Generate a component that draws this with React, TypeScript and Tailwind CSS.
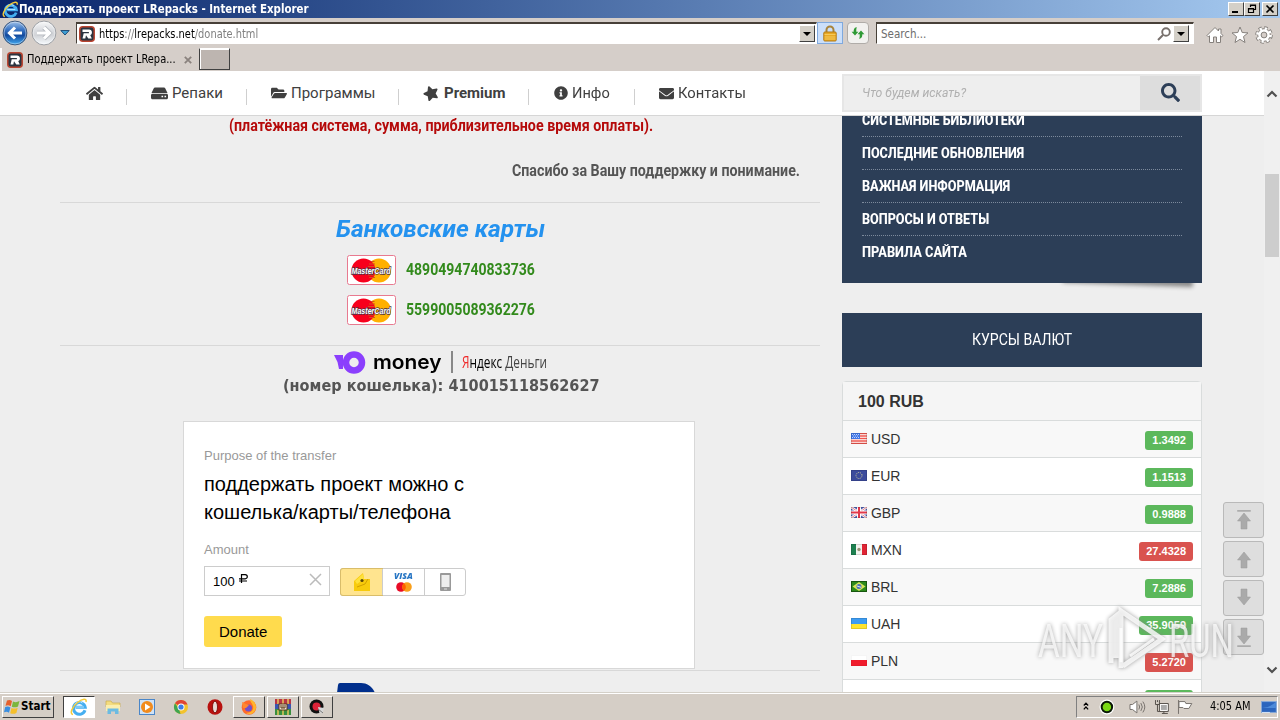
import { ReactNode, useLayoutEffect, useRef, useState } from 'react';
import { FaHome, FaFolderOpen, FaStar, FaInfoCircle, FaEnvelope, FaSearch } from 'react-icons/fa';

// Renders a line of text squeezed or stretched to an exact width
function Fit({ w, className = '', children }: { w: number; className?: string; children: ReactNode }) {
  const ref = useRef<HTMLSpanElement>(null);
  const [scale, setScale] = useState(1);

  useLayoutEffect(() => {
    if (ref.current) setScale(w / ref.current.offsetWidth);
  }, [w]);

  return (
    <span className={`block shrink-0 whitespace-nowrap ${className}`} style={{ width: w }}>
      <span ref={ref} className="inline-block origin-left" style={{ transform: `scaleX(${scale})` }}>
        {children}
      </span>
    </span>
  );
}

const menuItems = [
  { label: 'СИСТЕМНЫЕ БИБЛИОТЕКИ', w: 163 },
  { label: 'ПОСЛЕДНИЕ ОБНОВЛЕНИЯ', w: 162 },
  { label: 'ВАЖНАЯ ИНФОРМАЦИЯ', w: 148 },
  { label: 'ВОПРОСЫ И ОТВЕТЫ', w: 127 },
  { label: 'ПРАВИЛА САЙТА', w: 105 },
];

const rates = [
  { code: 'USD', value: '1.3492', up: true },
  { code: 'EUR', value: '1.1513', up: true },
  { code: 'GBP', value: '0.9888', up: true },
  { code: 'MXN', value: '27.4328', up: false },
  { code: 'BRL', value: '7.2886', up: true },
  { code: 'UAH', value: '35.9059', up: true },
  { code: 'PLN', value: '5.2720', up: false },
];

function Flag({ code }: { code: string }) {
  return (
    <svg width="16" height="11" viewBox="0 0 16 11" className="mb-[2px] shrink-0">
      {code === 'USD' && (
        <>
          <rect width="16" height="11" fill="#fff" />
          <path d="M0 .5h16M0 3h16M0 5.5h16M0 8h16M0 10.5h16" stroke="#f0574f" strokeWidth="1.3" />
          <rect width="9" height="6" fill="#3f76e8" />
          <path d="M1 1.5h7M2 3h6M1 4.5h7" stroke="#dfe8ff" strokeWidth=".8" strokeDasharray="1 1" />
        </>
      )}
      {code === 'EUR' && (
        <>
          <rect width="16" height="11" fill="#3c4b9c" />
          <circle cx="8" cy="5.5" r="3" fill="none" stroke="#d5d29a" strokeWidth="1" strokeDasharray="1 1.1" />
        </>
      )}
      {code === 'GBP' && (
        <>
          <rect width="16" height="11" fill="#4f5fae" />
          <path d="M0 0l16 11M16 0L0 11" stroke="#fff" strokeWidth="2.4" />
          <path d="M0 0l16 11M16 0L0 11" stroke="#dc6070" strokeWidth=".8" />
          <path d="M8 0v11M0 5.5h16" stroke="#fff" strokeWidth="4" />
          <path d="M8 0v11M0 5.5h16" stroke="#e2384a" strokeWidth="2" />
        </>
      )}
      {code === 'MXN' && (
        <>
          <rect width="16" height="11" fill="#f4f4f0" />
          <rect width="5" height="11" fill="#1e8050" />
          <rect x="11" width="5" height="11" fill="#e02535" />
          <circle cx="8" cy="5.5" r="1.7" fill="#9b9478" />
        </>
      )}
      {code === 'BRL' && (
        <>
          <rect width="16" height="11" fill="#2c8a1c" />
          <path d="M8 1l6.5 4.5L8 10 1.5 5.5z" fill="#d8e45a" />
          <circle cx="8" cy="5.5" r="2.5" fill="#4a72b8" />
          <path d="M6 5l4 1.3" stroke="#fff" strokeWidth=".8" />
          <rect x=".5" y=".5" width="15" height="10" fill="none" stroke="#1c6412" />
        </>
      )}
      {code === 'UAH' && (
        <>
          <rect width="16" height="11" fill="#ffe42e" />
          <rect width="16" height="6" fill="#3d9cf2" />
        </>
      )}
      {code === 'PLN' && (
        <>
          <rect width="16" height="11" fill="#fff" />
          <rect y="5" width="16" height="6" fill="#f01c2c" />
        </>
      )}
      <rect x=".5" y=".5" width="15" height="10" fill="none" stroke="#000" strokeOpacity={code === 'PLN' ? 0.04 : 0.12} />
    </svg>
  );
}

function SiteIcon() {
  return (
    <svg width="16" height="16" viewBox="0 0 16 16" className="shrink-0">
      <rect x=".8" y=".8" width="14.4" height="14.4" rx="3" fill="#2b3440" stroke="#b8432f" strokeWidth="1.500" />
      <path d="M3.500 3.500h6.500c3.600 0 3.800 5 1.200 5.600L12.800 12.500H9.300L7 9.200 6.300 12.500H3.500l1.200-5.200h5.200V6H3.500z" fill="#fff" />
    </svg>
  );
}

function IeIcon({ size }: { size: number }) {
  return (
    <svg width={size} height={size} viewBox="0 0 18 18" className="shrink-0">
      <path d="M15 12.300A5.900 5.900 0 1 1 15.200 9.300H5.500" fill="none" stroke="#45aef0" strokeWidth="3" />
      <path d="M5.500 9h8.500M4.500 7a5 5 0 0 1 8-2" fill="none" stroke="#b4e4ff" strokeWidth="1" />
      <path d="M3 16.500C-1 15.500 2.500 8.500 7.500 4.500s9.500-4.500 8.500-.5" fill="none" stroke="#f4cb3a" strokeWidth="1.500" />
    </svg>
  );
}

function NavArrow({ forward }: { forward?: boolean }) {
  return (
    <svg width="26" height="26" viewBox="0 0 26 26" className="shrink-0">
      <defs>
        <linearGradient id={forward ? 'fwd' : 'back'} x1="0" y1="0" x2="0" y2="1">
          <stop offset="0" stopColor={forward ? '#fafafa' : '#a4c4ea'} />
          <stop offset=".35" stopColor={forward ? '#dcdee2' : '#3c76c4'} />
          <stop offset=".6" stopColor={forward ? '#d2d4d8' : '#124a9e'} />
          <stop offset="1" stopColor={forward ? '#f8fcff' : '#46aef4'} />
        </linearGradient>
      </defs>
      <circle cx="13" cy="13" r="11.900" fill={forward ? 'url(#fwd)' : 'url(#back)'} stroke={forward ? '#9a9da2' : '#3b5578'} />
      <circle cx="13" cy="13" r="10.900" fill="none" stroke="#fff" strokeOpacity=".4" />
      <g transform={forward ? 'translate(26 0) scale(-1 1)' : undefined} fill="none">
        {forward && <path d="M20 13H8.500M13 7.500L7.500 13l5.500 5.500" stroke="#b4b8be" strokeWidth="4.600" />}
        <path d="M20 13H8.500M13 7.500L7.500 13l5.500 5.500" stroke="#fff" strokeWidth="3.100" />
      </g>
    </svg>
  );
}

function DropButton() {
  return (
    <span className="flex h-[17px] w-4 shrink-0 items-center justify-center border border-t-white border-l-white border-r-[#404040] border-b-[#404040] bg-[#d4d0c8]">
      <svg width="8" height="4" viewBox="0 0 8 4"><path d="M0 0h8L4 4z" fill="#000" /></svg>
    </span>
  );
}

function WindowButton({ kind }: { kind: 'min' | 'restore' | 'close' }) {
  return (
    <span className="flex h-[14px] w-4 items-center justify-center border border-t-white border-l-white border-r-[#404040] border-b-[#404040] bg-[#d4d0c8]">
      <svg width="10" height="10" viewBox="0 0 10 10" fill="none" stroke="#000">
        {kind === 'min' && <path d="M1 8h6" strokeWidth="2" />}
        {kind === 'restore' && <path d="M3.500 3V1h5v4.500H7M3 1.500h6M1.500 4.500h5v4h-5zM1 5h6" strokeWidth="1.200" />}
        {kind === 'close' && <path d="M1.500 1.500l7 7M8.500 1.500l-7 7" strokeWidth="1.700" />}
      </svg>
    </span>
  );
}

function BrowserChrome() {
  return (
    <div className="h-[71px] shrink-0 bg-[#d5cec9] font-['DejaVu_Sans_Condensed','DejaVu_Sans',sans-serif] text-[11.500px]">
      <div className="flex h-[18px] items-center bg-linear-to-r from-[#0a246a] to-[#a6caf0] pr-[2px] pl-[2px] text-white">
        <IeIcon size={17} />
        <Fit w={290} className="font-bold leading-[18px]">Поддержать проект LRepacks - Internet Explorer</Fit>
        <div className="ml-auto flex">
          <WindowButton kind="min" />
          <WindowButton kind="restore" />
          <span className="ml-[2px]"><WindowButton kind="close" /></span>
        </div>
      </div>

      {/* Address bar */}
      <div className="flex h-[30px] items-center pl-[2px]">
        <div className="flex gap-[3px]">
          <NavArrow />
          <NavArrow forward />
        </div>
        <svg width="10" height="6" viewBox="0 0 10 6" className="ml-[3px] shrink-0"><path d="M.8.5h8.400L5 5z" fill="#3f9fd4" stroke="#224e78" /></svg>
        <div className="ml-[6px] flex h-[22px] w-[741px] shrink-0 items-center border border-t-2 border-t-[#474038] border-l-[#474038] border-r-white border-b-white bg-white pl-[2px]">
          <SiteIcon />
          <Fit w={159} className="ml-[4px] leading-[18px]">
            <span className="text-black">https</span><span className="text-[#808080]">://</span><span className="text-black">lrepacks.net</span><span className="text-[#808080]">/donate.html</span>
          </Fit>
          <span className="mr-px ml-auto"><DropButton /></span>
        </div>
        <div className="flex h-[22px] w-[26px] shrink-0 items-center justify-center border border-[#7fa9de] bg-[#cbdffa]">
          <svg width="14" height="17" viewBox="0 0 14 17">
            <path d="M3.500 8V5a3.500 3.500 0 0 1 7 0v3" fill="none" stroke="#a8843c" strokeWidth="2" />
            <rect x=".8" y="7" width="12.400" height="9" rx="1" fill="#e9a925" stroke="#b37a14" />
            <path d="M1.500 9.500h11M1.500 12h11M1.500 14h11" stroke="#f8d36c" strokeWidth=".8" />
          </svg>
        </div>
        <div className="ml-1 flex h-[22px] w-[22px] shrink-0 items-center justify-center rounded-sm border border-[#b0aca8] bg-[#f2f1ef]">
          <svg width="14" height="12" viewBox="0 0 16 14" fill="#2f9a35">
            <path d="M6.500 0C3 1 3 3.500 3 5.500H.5l4 4.500 4-4.500H6V3z" />
            <path d="M9.500 14c3.500-1 3.500-3.500 3.500-5.500h2.500l-4-4.500-4 4.500H10V11z" />
          </svg>
        </div>
        <div className="ml-[7px] flex h-[22px] w-[318px] shrink-0 items-center border border-t-2 border-t-[#474038] border-l-[#474038] border-r-white border-b-white bg-white pl-1">
          <Fit w={45} className="leading-[18px] text-[#6d6d6d]">Search...</Fit>
          <svg width="15" height="14" viewBox="0 0 15 14" fill="none" stroke="#77706c" strokeWidth="1.900" className="mr-px ml-auto">
            <circle cx="9" cy="5" r="3.800" />
            <path d="M6 8l-5 5" />
          </svg>
          <span className="mr-1"><DropButton /></span>
        </div>
        <div className="mt-1 ml-[12px] flex gap-[7px]">
          <svg width="18" height="18" viewBox="0 0 18 18" fill="#fff" stroke="#85807c" strokeLinejoin="round">
            <path d="M1 9.500L9 1.500l3.500 3.500V3H15v4.500l2 2-1.300 1.300-1.200-1V16.500h-4V11h-3v5.500h-4V9.800l-1.200 1z" />
          </svg>
          <svg width="18" height="18" viewBox="0 0 18 18" fill="#fff" stroke="#85807c" strokeLinejoin="round">
            <path d="M9 1l2.200 5.500 5.800.4-4.500 3.700 1.500 5.900-5-3.200-5 3.200 1.500-5.900L1 6.900l5.800-.4z" />
          </svg>
          <svg width="18" height="18" viewBox="0 0 18 18" className="-ml-px">
            <circle cx="9" cy="9" r="7" fill="none" stroke="#85807c" strokeWidth="3.600" strokeDasharray="3.200 2.300" />
            <circle cx="9" cy="9" r="6.300" fill="#fff" stroke="#85807c" />
            <circle cx="9" cy="9" r="6.500" fill="none" stroke="#fff" strokeWidth="2.800" strokeDasharray="2.200 2.900" />
            <circle cx="9" cy="9" r="2.900" fill="#d5cec9" stroke="#85807c" />
          </svg>
        </div>
      </div>

      {/* Tabs */}
      <div className="flex h-[23px]">
        <div className="flex w-[198px] items-center border-l-2 border-l-white pl-[5px]">
          <SiteIcon />
          <Fit w={149} className="ml-[4px] text-black">Поддержать проект LRepa...</Fit>
          <svg width="8" height="8" viewBox="0 0 8 8" className="ml-[8px]"><path d="M.8.8l6.400 6.400M7.200.8L.8 7.200" stroke="#8a827e" strokeWidth="1.800" /></svg>
        </div>
        <div className="ml-px h-[22px] w-[31px] border border-t-white border-l-[#404040] border-r-[#404040] border-b-[#404040] bg-[#bdb5b0] shadow-[inset_1px_1px_0_#fff]" />
      </div>
    </div>
  );
}

function Separator({ className }: { className: string }) {
  return <span className={`mt-2 h-4 w-px bg-[#cfcfcf] ${className}`} />;
}

function SiteHeader() {
  return (
    <div className="flex h-[45px] shrink-0 border-b border-[#d6d6d6] bg-white text-[#404040]">
      <nav className="flex h-[44px] w-[842px] items-center pl-[86px] text-[15px]">
        <FaHome size={17} />
        <Separator className="ml-[23px]" />
        <svg width="17" height="13" viewBox="0 0 17 13" fill="currentColor" className="ml-[24px]">
          <path d="M4 .5h9c.6 0 1 .3 1.200.8L16.500 6H.5l2.300-4.700C3 .8 3.400.5 4 .5z" />
          <path fillRule="evenodd" d="M1.500 6.800h14c.9 0 1.500.6 1.500 1.500v2.400c0 .9-.6 1.500-1.500 1.500h-14C.6 12.200 0 11.600 0 10.700V8.300c0-.9.600-1.500 1.500-1.500zm9 1.900v1.600h1.600V8.700zm3 0v1.600h1.600V8.700z" />
        </svg>
        <Fit w={51} className="ml-[4px]">Репаки</Fit>
        <Separator className="ml-[23px]" />
        <FaFolderOpen size={16} className="ml-[24px]" />
        <Fit w={84} className="ml-[4px]">Программы</Fit>
        <Separator className="ml-[23px]" />
        <FaStar size={16} className="ml-[24px] -rotate-[20deg]" />
        <Fit w={61} className="ml-[5px] font-bold">Premium</Fit>
        <Separator className="ml-[23px]" />
        <FaInfoCircle size={14} className="ml-[25px]" />
        <Fit w={38} className="ml-[4px]">Инфо</Fit>
        <Separator className="ml-[24px]" />
        <FaEnvelope size={15} className="ml-[24px]" />
        <Fit w={68} className="ml-[4px]">Контакты</Fit>
      </nav>
      <div className="mt-[3px] flex h-[38px] w-[360px] border-2 border-[#e6e6e6] bg-[#eee]">
        <div className="flex flex-1 items-center pl-[18px] text-[12px] text-[#b0b0b0] italic">
          <Fit w={104}>Что будем искать?</Fit>
        </div>
        <div className="flex w-[60px] items-center justify-center bg-[#ddd] pb-px text-[#2d3f58]">
          <FaSearch size={19} />
        </div>
      </div>
    </div>
  );
}

function MasterCard() {
  return (
    <svg width="49" height="30" viewBox="0 0 49 30" className="shrink-0">
      <rect x=".5" y=".5" width="48" height="29" rx="2" fill="#fff" stroke="#e87a90" />
      <circle cx="32" cy="15.500" r="12" fill="#ffb000" />
      <circle cx="16.500" cy="15.500" r="12" fill="#f8001c" />
      <path d="M24 6.500h3.500M22 9h6M21 11.500h7M21 20h7M22 22.500h6" stroke="#d8521a" strokeWidth="1" />
      <g fontFamily="Liberation Sans, sans-serif" fontSize="8.500" fontStyle="italic" fontWeight="bold">
        <text x="4.500" y="18.500" fill="#fff" stroke="#4a3444" strokeWidth="1.400" paintOrder="stroke" textLength="39" lengthAdjust="spacingAndGlyphs">MasterCard</text>
      </g>
    </svg>
  );
}

function DonateForm() {
  return (
    <div className="h-[248px] w-[512px] border border-[#d8d8d8] bg-white pt-[25px] pl-[20px] font-['Liberation_Sans',Arial,sans-serif]">
      <p className="text-[13px] leading-[18px] text-[#999]">Purpose of the transfer</p>
      <div className="mt-[5px] text-[20px] leading-[28px] text-black">
        <Fit w={260}>поддержать проект можно с</Fit>
        <Fit w={247}>кошелька/карты/телефона</Fit>
      </div>
      <p className="mt-[15px] text-[13px] leading-[18px] text-[#999]">Amount</p>
      <div className="mt-[7px] flex items-start gap-[10px]">
        <div className="flex h-[30px] w-[126px] items-center border border-[#ccc] pr-[7px] pl-2 text-black">
          <span className="pt-px text-[13px]">100</span>
          <svg width="9" height="9" viewBox="0 0 9 9" fill="none" stroke="#000" className="mb-[5px] ml-1"><path d="M2.500 9V.6h3.700a2 2 0 0 1 0 4.200H0M0 7h8" strokeWidth="1.200" /></svg>
          <svg width="13" height="13" viewBox="0 0 13 13" className="mb-[3px] ml-auto"><path d="M1 1l11 11M12 1L1 12" stroke="#bbb" strokeWidth="1.500" /></svg>
        </div>
        <div className="mt-[2px] flex h-[28px] w-[126px] rounded-[3px] border border-[#ccc]">
          <div className="flex w-[41px] items-center justify-center rounded-l-[2px] bg-[#ffe48f] shadow-[0_0_0_1px_#d9bd6a]">
            <svg width="18" height="20" viewBox="0 0 18 20">
              <path d="M1 9l9-8 1 6h6v12H1z" fill="#f8cb0c" />
              <path d="M2 9l8-7 1 5-7 5z" fill="#ffe13a" />
              <circle cx="9" cy="8.500" r="1.600" fill="#5d4708" />
              <path d="M4 15l8-3 3-5" fill="none" stroke="#d3a000" />
            </svg>
          </div>
          <div className="flex w-[43px] flex-col items-center border-x border-[#ccc]">
            <Fit w={19} className="mt-[2px] font-['Open_Sans',sans-serif] text-[9px] leading-[9px] font-extrabold text-[#2876c4] italic">VISA</Fit>
            <svg width="16" height="10" viewBox="0 0 16 10" className="mt-[2px]">
              <circle cx="5" cy="5" r="4.800" fill="#e80b26" />
              <circle cx="11" cy="5" r="4.800" fill="#f99f1b" />
              <path d="M8 1.200a4.800 4.800 0 0 1 0 7.600 4.800 4.800 0 0 1 0-7.600z" fill="#ff5f00" />
            </svg>
          </div>
          <div className="flex flex-1 items-center justify-center">
            <svg width="11" height="18" viewBox="0 0 11 18"><rect width="11" height="18" rx="1" fill="#999" /><rect x="1.500" y="2" width="8" height="12" fill="#eee" /><path d="M4 16h3" stroke="#ddd" /></svg>
          </div>
        </div>
      </div>
      <button className="mt-[20px] block h-[31px] w-[78px] rounded-[3px] bg-[#ffdb4d] pt-px pl-[15px] text-[15px] text-black">
        <Fit w={48} className="text-left">Donate</Fit>
      </button>
    </div>
  );
}

function MainColumn() {
  return (
    <main className="flex w-[760px] shrink-0 flex-col items-center">
      <Fit w={424} className="self-start ml-[169px] text-[16px] leading-[19px] font-bold text-[#b50a0a]">
        (платёжная система, сумма, приблизительное время оплаты).
      </Fit>
      <Fit w={288} className="mt-[26px] mr-[20px] self-end text-[16px] leading-[19px] font-bold text-[#555]">
        Спасибо за Вашу поддержку и понимание.
      </Fit>
      <div className="mt-[22px] h-px w-full shrink-0 bg-[#d8d8d8]" />
      <Fit w={209} className="mt-[12px] ml-px text-[24px] leading-[28px] font-bold text-[#2492ef] italic">Банковские карты</Fit>
      <div className="mt-[12px] ml-[2px] flex flex-col gap-[10px] text-[16px] font-bold text-[#328a1c]">
        <div className="flex h-[30px] gap-[10px]"><MasterCard /><Fit w={129} className="leading-[29px]">4890494740833736</Fit></div>
        <div className="flex h-[30px] gap-[10px]"><MasterCard /><Fit w={129} className="leading-[29px]">5599005089362276</Fit></div>
      </div>
      <div className="mt-[20px] h-px w-full shrink-0 bg-[#d8d8d8]" />
      <div className="mt-[4px] flex h-[24px] w-[213px] shrink-0 items-center">
        <svg width="32" height="23" viewBox="0 0 32 23" className="shrink-0">
          <path d="M0 4h9v14L5 18 3.500 11z" fill="#8b3ffd" />
          <circle cx="20" cy="11.500" r="8" fill="none" stroke="#8b3ffd" strokeWidth="6.500" />
        </svg>
        <Fit w={69} className="ml-[7px] font-['Inter',sans-serif] text-[20px] leading-[22px] font-semibold text-black">money</Fit>
        <span className="ml-[9px] h-[22px] w-[2px] bg-[#888]" />
        <Fit w={85} className="ml-[9px] font-['Open_Sans',sans-serif] text-[16px] leading-[24px] text-[#444]">
          <span className="text-[#ef2b2b]">Я</span><span className="text-black">ндекс</span> Деньги
        </Fit>
      </div>
      <Fit w={317} className="ml-[2px] font-['DejaVu_Sans_Condensed','DejaVu_Sans',sans-serif] text-[16.500px] leading-[24px] font-bold text-[#555]">
        (номер кошелька): 410015118562627
      </Fit>
      <div className="mt-[23px] ml-[123px] self-start"><DonateForm /></div>
      <div className="mt-px h-px w-full shrink-0 bg-[#d8d8d8]" />
      <svg width="38" height="10" viewBox="0 0 38 10" className="mt-[12px] ml-[277px] shrink-0 self-start"><path d="M3 0h21c6 0 11 3 14 10H0L1 2q.3-2 2-2z" fill="#012f8c" /></svg>
    </main>
  );
}

function Sidebar() {
  return (
    <aside className="w-[360px] shrink-0">
      <div className="relative h-[167px]">
        <div className="absolute right-[9px] bottom-[5px] h-3 w-[130px] origin-bottom-right rotate-[2deg] shadow-[0_9px_4px_#888]" />
        <div className="relative h-full overflow-hidden bg-[#2c3e57] px-[20px] text-[14px] font-extrabold text-white">
          <div className="-mt-[12px]">
            {menuItems.map((item, i) => (
              <div key={item.label} className={i < menuItems.length - 1 ? 'h-[33px] border-b border-dotted border-[#7d8a9c] leading-[32px]' : 'h-[33px] leading-[32px]'}>
                <Fit w={item.w}>{item.label}</Fit>
              </div>
            ))}
          </div>
        </div>
      </div>
      <div className="mt-[30px] flex h-[54px] items-center justify-center bg-[#2c3e57] text-[16px] text-white">
        <Fit w={100}>КУРСЫ ВАЛЮТ</Fit>
      </div>
      <div className="mt-[14px] rounded-t-sm border border-[#d9dcdc] bg-white font-['Liberation_Sans',Arial,sans-serif] text-[#333]">
        <div className="h-[39px] border-b border-[#d9dcdc] bg-[#f5f5f5] pl-[15px] text-[16px] leading-[39px] font-bold">100 RUB</div>
        {rates.map((rate) => (
          <div key={rate.code} className="flex h-[37px] items-center border-b border-[#d9dcdc] px-2 text-[14px] odd:bg-white even:bg-[#f8f8f8]">
            <Flag code={rate.code} />
            <span className="ml-[4px] tracking-[-0.1px]">{rate.code}</span>
            <span className={`mt-[3px] ml-auto rounded-[3px] px-[7px] text-[11px] leading-[19px] font-bold text-white ${rate.up ? 'bg-[#5cb85c]' : 'bg-[#d9534f]'}`}>
              {rate.value}
            </span>
          </div>
        ))}
        <div className="flex h-[37px] justify-end bg-[#fff] px-2"><span className="mt-[10px] h-[19px] w-[48px] rounded-[3px] bg-[#5cb85c]" /></div>
      </div>
    </aside>
  );
}

function ScrollButtons() {
  return (
    <div className="absolute top-[502px] left-[1223px] flex flex-col gap-[3px]">
      {['top', 'up', 'down', 'bottom'].map((dir) => (
        <div key={dir} className="flex h-[36px] w-[41px] items-center justify-center rounded-[3px] border border-[#b9b9b9] bg-[#dedede]">
          <svg width="16" height="22" viewBox="0 0 16 22" fill="#aaa" stroke="#999" strokeWidth=".5" className={dir === 'down' || dir === 'bottom' ? 'rotate-180' : ''}>
            {(dir === 'top' || dir === 'bottom') && <path d="M1.500 1.500h13v.8h-13z" />}
            <path d="M8 4l6.500 8H11v8H5v-8H1.500z" />
          </svg>
        </div>
      ))}
    </div>
  );
}

function Watermark() {
  return (
    <div className="absolute top-[606px] left-[1038px] flex items-center font-['Roboto',sans-serif] text-[46px] leading-[70px] font-normal text-white/75 drop-shadow-[0_0_2px_#888]">
      <Fit w={65}>ANY</Fit>
      <svg width="60" height="70" viewBox="0 0 60 70" className="mx-[3px]" fill="none" stroke="#fff" strokeOpacity=".8">
        <path d="M5 57V14l5-4v42M15 62V5l41 28-39 27" strokeWidth="5" />
        <path d="M15 22v34M24 50l24-17" strokeWidth="3" />
      </svg>
      <Fit w={65}>RUN</Fit>
    </div>
  );
}

function TaskButton({ pressed, children }: { pressed?: boolean; children: ReactNode }) {
  return (
    <span className={`flex h-[22px] w-[32px] items-center justify-center border ${pressed ? 'border-[#404040] border-r-white border-b-white bg-white' : 'border-t-white border-l-white border-r-[#404040] border-b-[#404040]'}`}>
      {children}
    </span>
  );
}

function Taskbar() {
  return (
    <div className="flex h-[28px] shrink-0 items-center border-t border-[#d4d0c8] bg-[#d5cec6] pl-[2px] font-['DejaVu_Sans_Condensed','DejaVu_Sans',sans-serif] text-[11.500px] text-black shadow-[inset_0_1px_0_#fff]">
      <div className="mt-px flex h-[22px] w-[52px] items-center border border-t-white border-l-white border-r-[#404040] border-b-[#404040] pl-px">
        <svg width="16" height="16" viewBox="0 0 16 16" className="shrink-0">
          <path d="M3 1.500C5 .5 6.500.8 8 2L6.700 7.200C5 6 3.500 6 1.500 6.800z" fill="#e6602c" />
          <path d="M9 2.500c2 1 4 1 6.500-.4L14 7.500c-2 1-4 1.200-6.200.2z" fill="#7bb63c" />
          <path d="M1.200 8c1.800-.8 3.600-.7 5.200.4L5 13.700C3.500 12.500 2 12.400 0 13.200z" fill="#3a8ee0" />
          <path d="M7.500 8.900c2 1 4 .8 6.200-.2L12.400 14c-2 1-4 1.200-6.200.2z" fill="#f5bf2b" />
        </svg>
        <Fit w={29} className="ml-px font-bold">Start</Fit>
      </div>
      <div className="mt-px ml-[9px] flex items-center">
        <TaskButton pressed><IeIcon size={18} /></TaskButton>
        <svg width="16" height="16" viewBox="0 0 16 16" className="ml-[10px]">
          <path d="M1 2h5l1.500 2H15v4H1z" fill="#f3dc80" stroke="#cbae4a" strokeWidth=".7" />
          <path d="M1 6h14v6H1z" fill="#fbeeae" />
          <path d="M2.500 15V9.500h11V15H10v-2.500H6V15z" fill="#6cbbe2" />
        </svg>
        <svg width="16" height="16" viewBox="0 0 16 16" className="ml-[18px]">
          <rect x=".5" y=".5" width="15" height="15" fill="#cfe2f6" stroke="#4a86c8" />
          <circle cx="8" cy="8" r="6" fill="#f18b1d" />
          <path d="M6 4.500l5.500 3.500L6 11.500z" fill="#fff" />
        </svg>
        <svg width="16" height="16" viewBox="0 0 16 16" className="ml-[18px]">
          <circle cx="8" cy="8" r="7" fill="#f3c32d" />
          <path d="M8 8L2 4.300A7 7 0 0 1 14.500 5.500H8z" fill="#e04536" />
          <path d="M2 4.300L6 10l1.500 5A7 7 0 0 1 2 4.300z" fill="#3fa551" />
          <circle cx="8" cy="8" r="3.500" fill="#fff" />
          <circle cx="8" cy="8" r="2.600" fill="#3e7de8" />
        </svg>
        <svg width="16" height="16" viewBox="0 0 16 16" className="ml-[18px]">
          <ellipse cx="8" cy="8" rx="7.500" ry="7.800" fill="#b8120f" />
          <ellipse cx="8" cy="8" rx="2.500" ry="5.800" fill="#e8dcd6" stroke="#6d0503" strokeWidth=".8" />
        </svg>
        <span className="ml-[10px]">
          <TaskButton>
            <svg width="16" height="16" viewBox="0 0 16 16">
              <circle cx="8" cy="8.500" r="7.300" fill="#ff6a2a" />
              <path d="M9 0c5 2 7 6 5.500 11-2 4.500-7 5-9.500 3 6 0 8-4 7-7S9 3 9 0z" fill="#ffb52e" />
              <circle cx="7.500" cy="9" r="3.500" fill="#7350c8" />
              <path d="M1 3l4 2 3 1-3 3H2z" fill="#ff8830" />
            </svg>
          </TaskButton>
        </span>
        <span className="ml-[2px]">
          <TaskButton>
            <svg width="16" height="16" viewBox="0 0 16 16">
              <rect width="16" height="5" fill="#b93445" />
              <rect y="5" width="16" height="5" fill="#3b55b0" />
              <rect y="10" width="16" height="6" fill="#3a8f3e" />
              <path d="M3 0v5M13 0v5M8 0v16M3 11v5M13 11v5" stroke="#e5c75c" strokeWidth="1.500" />
              <rect x="4" y="5" width="8" height="6" fill="#f0e7d6" stroke="#5c3618" />
              <path d="M6 6v3h4V6M8 6v3" fill="none" stroke="#583615" />
            </svg>
          </TaskButton>
        </span>
        <span className="ml-[2px]">
          <TaskButton>
            <svg width="16" height="16" viewBox="0 0 16 16">
              <circle cx="7.500" cy="7.500" r="7" fill="#111" />
              <circle cx="7.500" cy="7.500" r="4" fill="#dc2338" />
              <path d="M9 8l6 1-1.500 5.500-3-.5z" fill="#d7d7d7" />
              <path d="M9 10l5 4" stroke="#777" />
            </svg>
          </TaskButton>
        </span>
      </div>
      <div className="mt-px mr-[2px] ml-auto flex h-[22px] w-[202px] items-center border border-[#808080] border-r-white border-b-white pl-[6px]">
        <svg width="6" height="8" viewBox="0 0 6 8" fill="none" stroke="#000" strokeWidth="1.200" className="mb-[3px]"><path d="M.8 3.500L3 1l2.200 2.500M.8 7.500L3 5l2.200 2.500" /></svg>
        <svg width="16" height="16" viewBox="0 0 16 16" className="ml-[10px]"><circle cx="8" cy="8" r="7.500" fill="#fff" /><circle cx="8" cy="8" r="5.300" fill="#79d814" stroke="#0c1907" strokeWidth="2" /></svg>
        <svg width="17" height="16" viewBox="0 0 17 16" fill="none" stroke="#77726d" className="ml-[14px]">
          <path d="M1 5.500h2.500L8 2v12L3.500 10.500H1z" fill="#fff" />
          <path d="M10 5.500q1.500 2.500 0 5M12 4q3 4 0 8M14 2.500q4 5.500 0 11" />
        </svg>
        <svg width="16" height="16" viewBox="0 0 16 16" fill="#fff" stroke="#55504b" className="ml-[8px]">
          <path d="M5.500 4.500h9v8h-9zM8 14.500h6M10 12.500v2" />
          <path d="M7 6h6v5H7z" fill="#aaa" stroke="none" />
          <path d="M1.500 1v4.500h4V1M3.500 5.500v7h3M3.500 1v2" fill="none" />
        </svg>
        <svg width="16" height="16" viewBox="0 0 16 16" fill="#fff" stroke="#77726d" className="ml-[8px]"><path d="M1.500 1v14M2 2.500h6l1 2h6l-3 5H7L6 8.500H2z" /></svg>
        <Fit w={41} className="ml-[17px]">4:05 AM</Fit>
        <svg width="16" height="13" viewBox="0 0 16 13" className="ml-[10px]"><rect x=".5" y=".5" width="15" height="11" fill="#2c66be" stroke="#86a9d8" /><path d="M1 7q7 0 14-6v6z" fill="#4e8bda" /><path d="M1 11.500h8" stroke="#dae6f5" /></svg>
      </div>
    </div>
  );
}

export default function App() {
  return (
    <div className="relative flex h-[720px] w-[1280px] flex-col overflow-hidden bg-[#eee] font-['Roboto',sans-serif]">
      <BrowserChrome />
      <div className="flex h-[621px] shrink-0">
        <div className="flex w-[1264px] flex-col">
          <SiteHeader />
          <div className="flex h-[576px] gap-[22px] overflow-hidden pl-[60px]">
            <MainColumn />
            <Sidebar />
          </div>
        </div>
        <div className="flex w-4 flex-col items-center bg-[#f0f0f0] pt-[18px]">
          <svg width="12" height="9" viewBox="0 0 12 9" className="shrink-0"><path d="M1.500 7.500L6 3l4.500 4.500" fill="none" stroke="#505050" strokeWidth="2.200" /></svg>
          <div className="mt-[76px] h-[83px] w-[14px] shrink-0 bg-[#cdcdcd]" />
          <svg width="12" height="9" viewBox="0 0 12 9" className="mt-auto mb-[17px] shrink-0"><path d="M1.500 1.500L6 6l4.500-4.500" fill="none" stroke="#505050" strokeWidth="2.200" /></svg>
        </div>
      </div>
      <Taskbar />
      <ScrollButtons />
      <Watermark />
    </div>
  );
}
